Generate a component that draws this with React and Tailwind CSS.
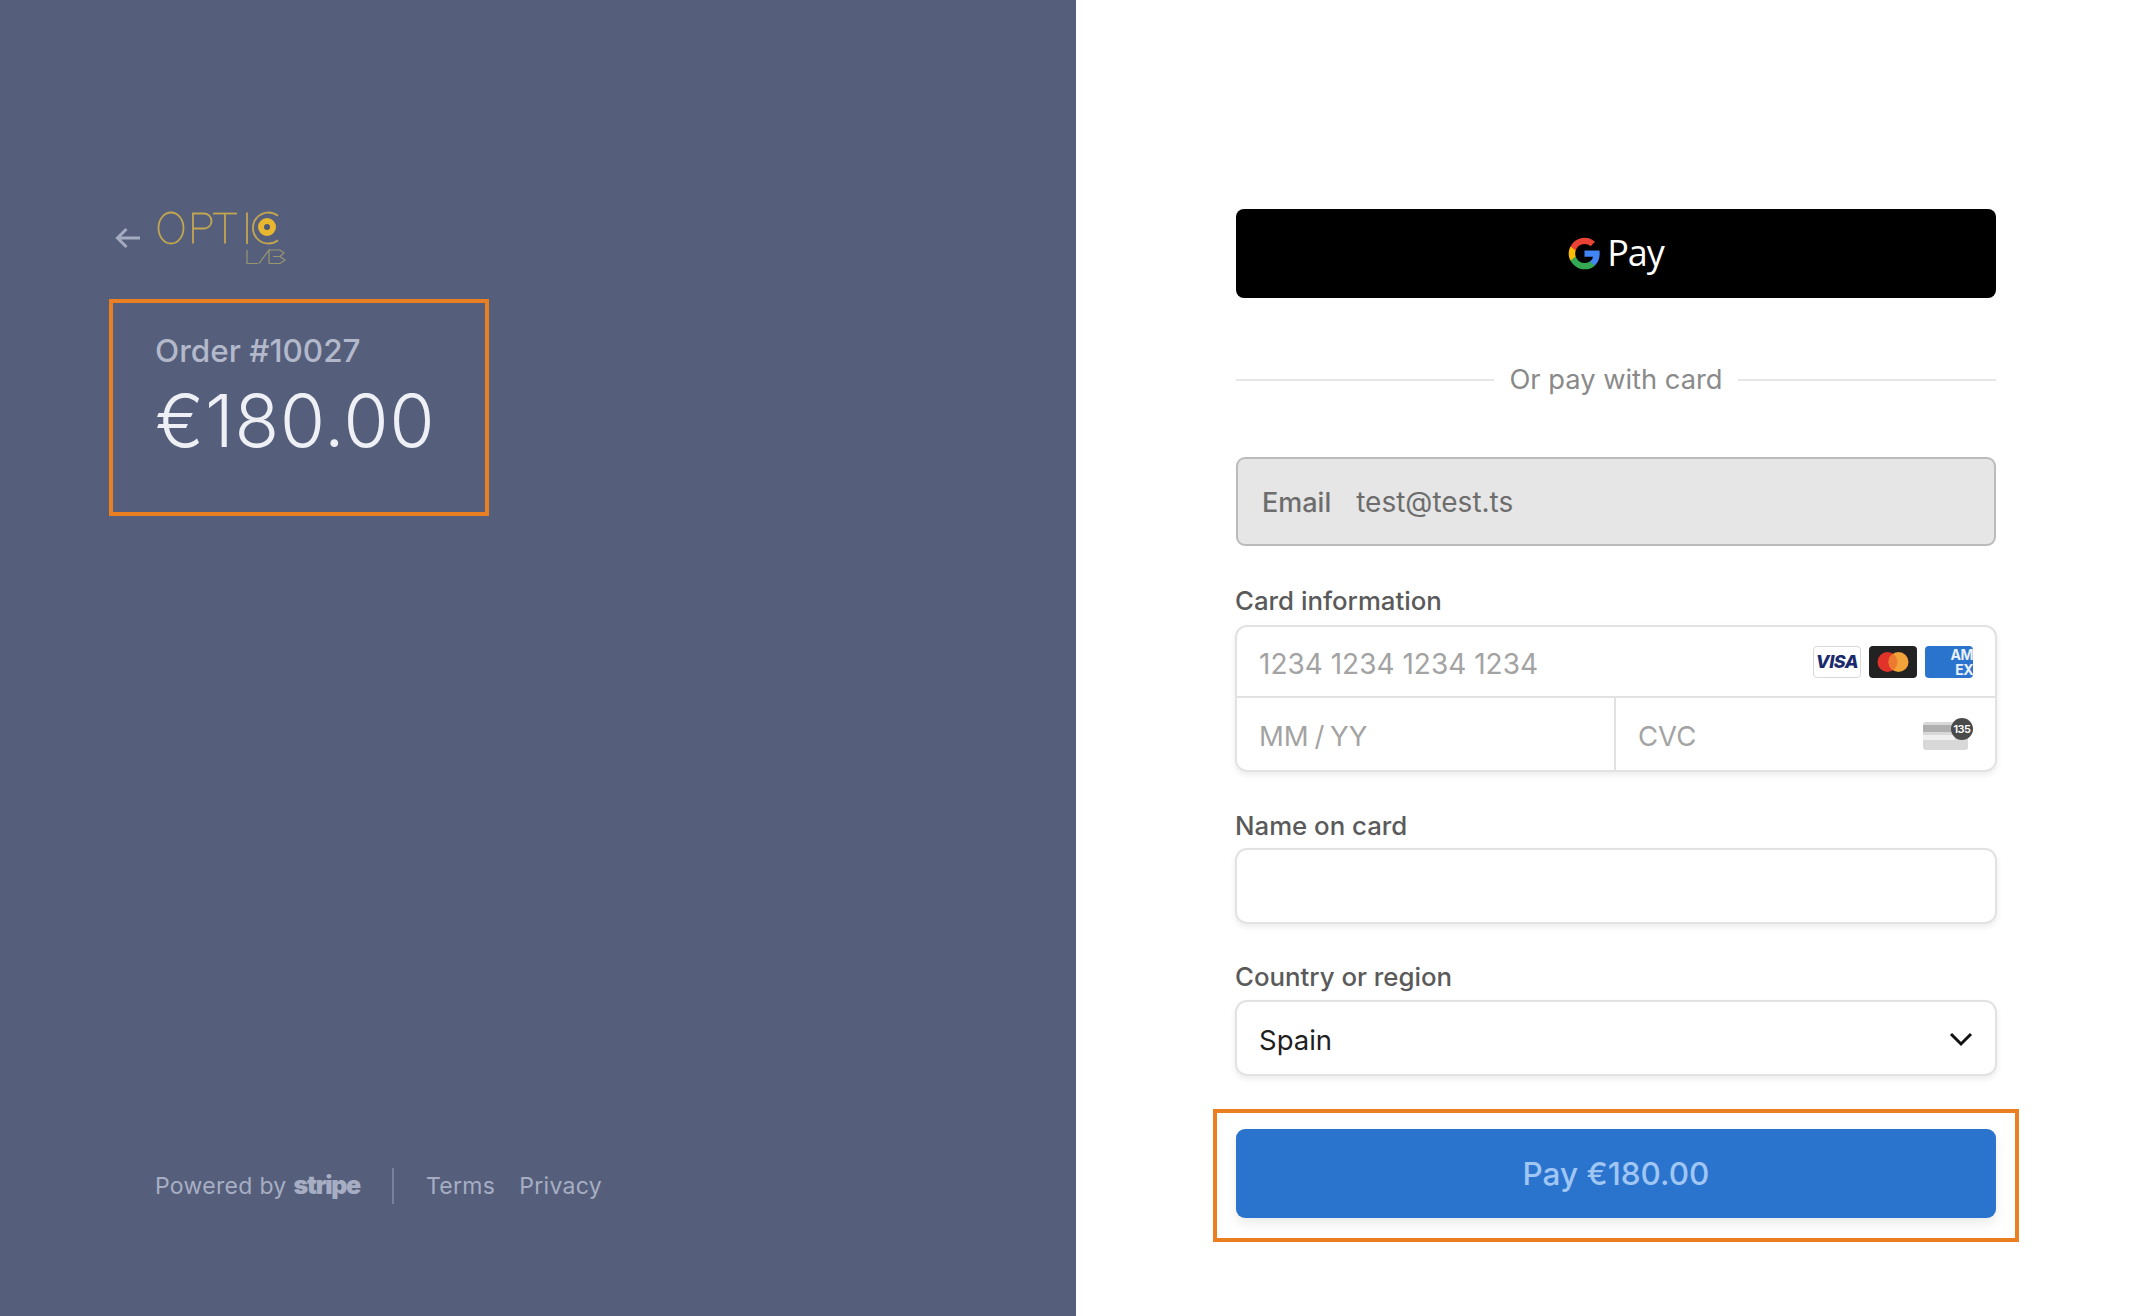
const font = { fontFamily: "Inter, 'Liberation Sans', sans-serif" }

function Logo() {
  return (
    <svg width="140" height="62" viewBox="0 0 140 62" fill="none" stroke="#c2a650" strokeWidth="1.8" aria-label="Optic Lab">
      <ellipse cx="20" cy="23" rx="12.500" ry="15.500" />
      <path d="M42 38.500V8.500h11a7.500 7.500 0 0 1 0 15H42" />
      <line x1="62" y1="8.500" x2="86" y2="8.500" />
      <line x1="74" y1="8.500" x2="74" y2="38.500" />
      <line x1="96" y1="7.500" x2="96" y2="39" />
      <path d="M127 10.800a15.500 15.500 0 1 0 0 24.400" />
      <circle cx="116" cy="22" r="6" stroke="#e9b72f" strokeWidth="6" />
      <circle cx="116" cy="22" r="2.600" fill="#4f5975" stroke="none" />
      <g stroke="#99966f" strokeWidth="1.2">
        <polyline points="96,45 96,58.500 107,58.500" />
        <polyline points="108,58.500 118,45 118,58.500" />
        <polyline points="118,45 129,45 133,48 129,51.500 122,51.500 129,51.500 134,55 129,58.500 118,58.500" />
      </g>
    </svg>
  )
}

function GoogleG() {
  return (
    <svg width="33" height="33" viewBox="0 0 48 48">
      <path fill="#4285f4" d="M46.1 24.5c0-1.7-.1-3.2-.4-4.7H24v9h12.4c-.5 2.8-2.200 5.200-4.600 6.800v5.700h7.400c4.400-4 6.900-9.900 6.900-16.800z" />
      <path fill="#34a853" d="M24 47c6.200 0 11.400-2 15.200-5.700l-7.400-5.700c-2 1.400-4.700 2.200-7.800 2.200-6 0-11-4-12.800-9.500H3.600v5.900C7.400 41.700 15.100 47 24 47z" />
      <path fill="#fbbc04" d="M11.200 28.300c-.5-1.400-.7-2.800-.7-4.300s.3-3 .7-4.300v-5.900H3.600C2 16.900 1 20.300 1 24s.9 7.100 2.600 10.200l7.600-5.900z" />
      <path fill="#ea4335" d="M24 10.200c3.400 0 6.400 1.200 8.800 3.400l6.600-6.600C35.400 3.300 30.200 1 24 1 15.100 1 7.400 6.300 3.600 13.800l7.600 5.900C13 14.200 18 10.200 24 10.200z" />
    </svg>
  )
}

function CardBrands() {
  return (
    <div className="flex items-center gap-[8px]">
      <div className="w-[48px] h-[32px] rounded-[4px] border border-[#d9d9d9] bg-white flex items-center justify-center text-[18px] font-extrabold italic text-[#1a2a6c] tracking-[-0.5px]">
        VISA
      </div>
      <div className="w-[48px] h-[32px] rounded-[4px] bg-[#222] flex items-center justify-center">
        <svg width="34" height="22" viewBox="0 0 34 22">
          <circle cx="11.500" cy="11" r="10" fill="#e2332b" />
          <circle cx="22.500" cy="11" r="10" fill="#f2a33a" />
          <path d="M17 2.700a10 10 0 0 1 0 16.600a10 10 0 0 1 0-16.600z" fill="#ee7a2f" />
        </svg>
      </div>
      <div className="w-[48px] h-[32px] rounded-[4px] bg-[#2b74ce] flex flex-col items-end justify-center text-[14px] leading-[15px] font-bold text-white/90 tracking-[-0.5px]">
        <div className="h-[15px]">AM</div>
        <div className="h-[15px]">EX</div>
      </div>
    </div>
  )
}

function CvcIcon() {
  return (
    <div className="relative w-[50px] h-[32px]">
      <div className="absolute left-0 top-[4px] w-[45px] h-[28px] rounded-[3px] bg-[#d8d8d8] overflow-hidden">
        <div className="mt-[3px] h-[7px] bg-[#b0b0b0]" />
        <div className="mt-[3px] h-[5px] w-[32px] bg-[#efefef]" />
      </div>
      <div className="absolute right-0 top-0 w-[22px] h-[22px] rounded-full bg-[#4a4a4a] text-white text-[11px] font-semibold flex items-center justify-center tracking-[-0.5px]">
        135
      </div>
    </div>
  )
}

export default function App() {
  return (
    <div className="flex h-screen w-full bg-white" style={font}>
      <div className="w-[1076px] shrink-0 bg-[#555f7b] flex flex-col pb-[112px]">
        <div className="flex items-start pl-[115px] pt-[205px]">
          <svg className="mt-[22px] mr-[10px]" width="26" height="22" viewBox="0 0 26 22" fill="none" stroke="#a5acc1" strokeWidth="3">
            <path d="M25 11H3M11.500 2L2.500 11l9 9" />
          </svg>
          <Logo />
        </div>
        <div className="ml-[109px] mt-[32px] w-[380px] h-[217px] border-4 border-[#e97f21] pl-[42px] pt-[25px]">
          <div className="text-[31.500px] leading-[46px] font-medium text-[#b3b9cb]">Order #10027</div>
          <div className="mt-[4px] text-[73px] leading-[86px] font-[350] tracking-[0.8px] text-[#eef0f6]">€180.00</div>
        </div>
        <div className="mt-auto pl-[155px] flex items-center h-[36px] text-[23px] text-[#a7aec3]">
          <span className="tracking-[0.3px]">Powered by</span>
          <span className="ml-[7px] text-[25px] font-black tracking-[-1.300px] text-[#a7aec3]">stripe</span>
          <div className="ml-[32px] w-[2px] h-[36px] bg-[#7a829b]" />
          <span className="ml-[32px] tracking-[0.3px]">Terms</span>
          <span className="ml-[24px] tracking-[0.3px]">Privacy</span>
        </div>
      </div>

      <div className="flex-1 pl-[160px] pt-[209px]">
        <div className="w-[760px] flex flex-col">
          <div className="h-[89px] rounded-[8px] bg-black flex items-center justify-center gap-[6px]">
            <GoogleG />
            <span className="text-[36px] text-white tracking-[-1px] -translate-y-[1px]" style={{ fontFamily: "'Open Sans', sans-serif" }}>Pay</span>
          </div>

          <div className="mt-[68px] h-[28px] flex items-center gap-[15px]">
            <div className="h-[2px] flex-1 bg-[#e6e6e6]" />
            <span className="text-[27.300px] text-[#8a8a8a]">Or pay with card</span>
            <div className="h-[2px] flex-1 bg-[#e6e6e6]" />
          </div>

          <div className="mt-[63px] h-[89px] rounded-[9px] border-2 border-[#bbbbbb] bg-[#e6e6e6] flex items-center px-[24px] text-[28px] text-[#6d6d6d]">
            <span className="font-medium text-[27px] pt-[3px]">Email</span>
            <span className="ml-[25px]">test@test.ts</span>
          </div>

          <label className="mt-[37px] -ml-[1px] h-[36px] text-[25.800px] font-medium text-[#5a5a5a] leading-[36px]">Card information</label>
          <div className="mt-[6px] -mx-[1px] rounded-[12px] border-2 border-[#e2e2e2] shadow-[0_3px_6px_rgba(0,0,0,0.08)]">
            <div className="h-[71px] flex items-center justify-between pl-[22px] pr-[22px] border-b-2 border-[#e2e2e2]">
              <span className="text-[28px] text-[#a3a3a3] pt-[5px]">1234 1234 1234 1234</span>
              <CardBrands />
            </div>
            <div className="h-[72px] flex">
              <div className="w-[379px] flex items-center pl-[22px] border-r-2 border-[#e2e2e2]">
                <span className="text-[27.500px] text-[#a3a3a3] pt-[5px] [word-spacing:-2px]">MM / YY</span>
              </div>
              <div className="flex-1 flex items-center justify-between pl-[22px] pr-[22px]">
                <span className="text-[27.500px] text-[#a3a3a3] pt-[5px]">CVC</span>
                <CvcIcon />
              </div>
            </div>
          </div>

          <label className="mt-[36px] -ml-[1px] h-[36px] text-[25.800px] font-medium text-[#5a5a5a] leading-[36px]">Name on card</label>
          <div className="mt-[4px] -mx-[1px] h-[76px] rounded-[12px] border-2 border-[#e2e2e2] shadow-[0_3px_6px_rgba(0,0,0,0.08)]" />

          <label className="mt-[35px] -ml-[1px] h-[36px] text-[25.800px] font-medium text-[#5a5a5a] leading-[36px]">Country or region</label>
          <div className="mt-[5px] -mx-[1px] h-[76px] rounded-[12px] border-2 border-[#e2e2e2] shadow-[0_3px_6px_rgba(0,0,0,0.08)] flex items-center justify-between pl-[22px] pr-[22px]">
            <span className="text-[27.500px] text-[#1f1f1f] pt-[5px]">Spain</span>
            <svg className="mt-[2px]" width="24" height="16" viewBox="0 0 24 16" fill="none" stroke="#111" strokeWidth="3">
              <path d="M2 3l10 10L22 3" />
            </svg>
          </div>

          <div className="mt-[33px] -mx-[23px] h-[133px] border-4 border-[#e97f21] px-[19px] pt-[16px]">
            <button className="w-full h-[89px] rounded-[9px] bg-[#2b74ce] shadow-[0_6px_12px_rgba(0,0,0,0.08)] text-[31.500px] font-medium text-[#a0c6f3]">
              Pay €180.00
            </button>
          </div>
        </div>
      </div>
    </div>
  )
}
